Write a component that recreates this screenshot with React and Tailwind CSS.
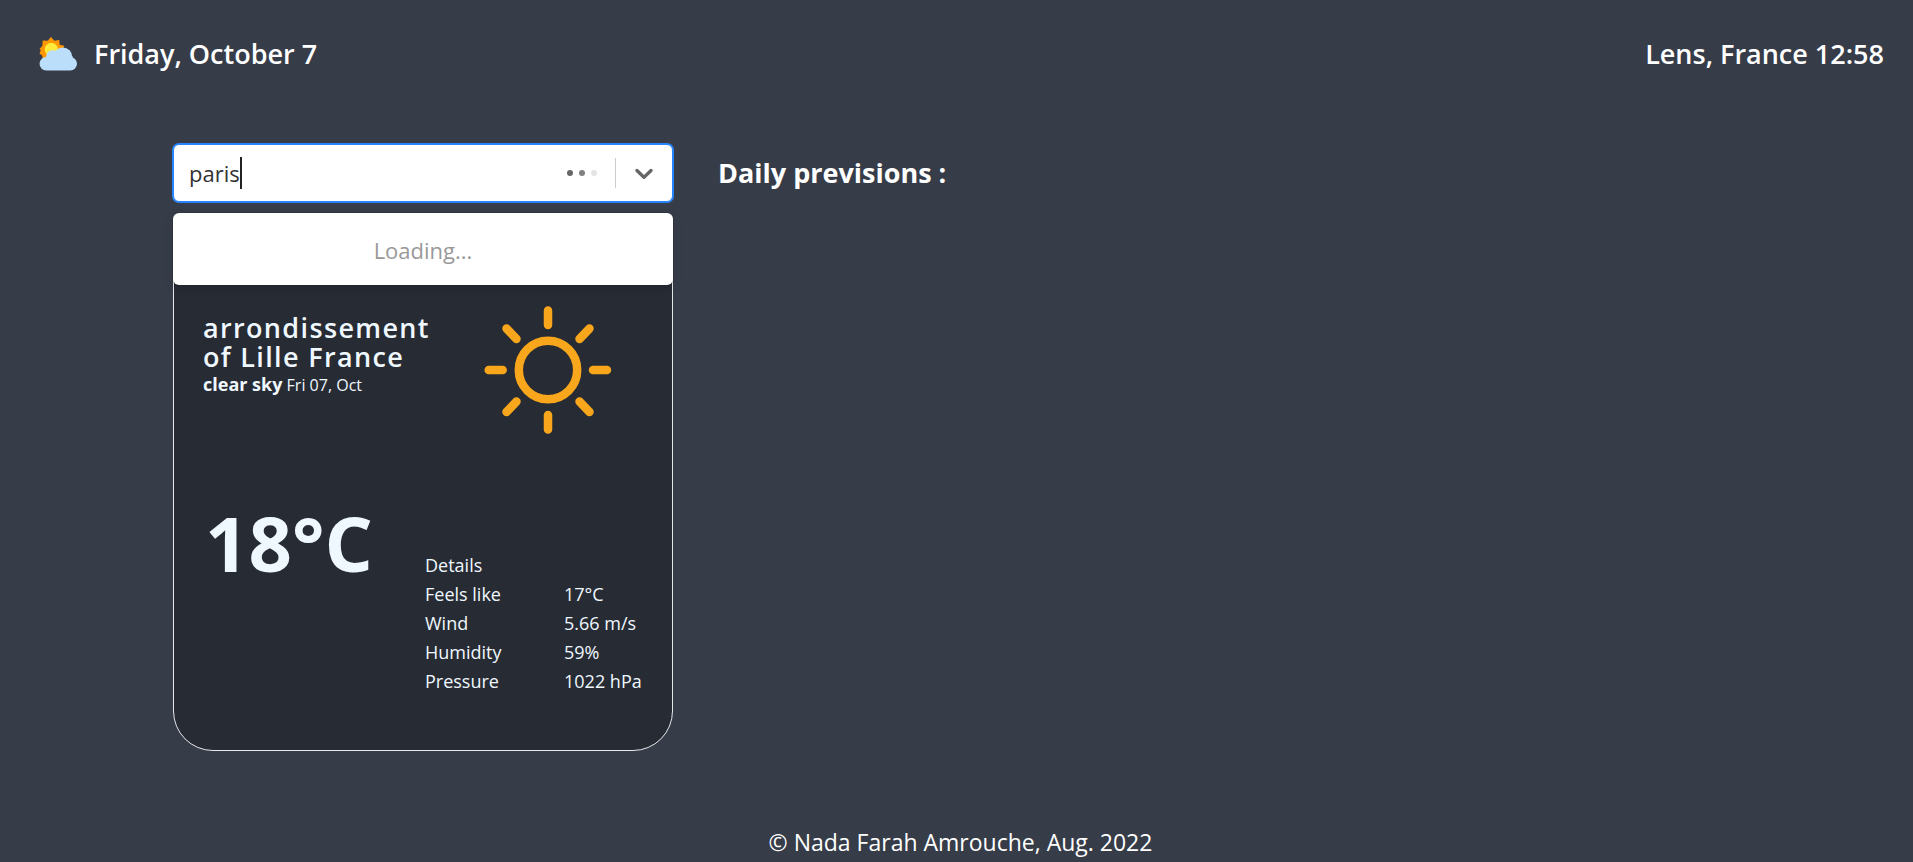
const details = [
  ["Feels like", "17°C"],
  ["Wind", "5.66 m/s"],
  ["Humidity", "59%"],
  ["Pressure", "1022 hPa"],
];

function PartlySunnyIcon() {
  return (
    <svg viewBox="0 0 40 40" className="size-10" aria-hidden="true">
      <path
        fill="#ff9800"
        d="M13 3l3.300 3.800 5-.900.300 4.800 4.600 1-1.700 4.300 2 3.800-4.400 2-.800 4.800-5-.500-3.300 3-3.300-3-5 .500-.300-4.800-2.900-2.300 1.300-3.500L1.500 15l2.900-3.200.300-5.400 5 .400z"
      />
      <circle cx="13.300" cy="15.300" r="6.600" fill="#ffeb3b" />
      <g fill="#bbdefb">
        <rect x="1.500" y="23" width="37.500" height="13.500" rx="6.750" />
        <circle cx="14.500" cy="22.500" r="6.300" />
        <circle cx="24.800" cy="23" r="9.500" />
        <path d="M8.500 22h26v8h-26z" />
      </g>
    </svg>
  );
}

function SunIcon() {
  return (
    <svg
      viewBox="0 0 128 128"
      className="size-32"
      fill="none"
      stroke="#f8a61b"
      strokeWidth="8.500"
      strokeLinecap="round"
      aria-hidden="true"
    >
      <circle cx="64" cy="64" r="29.200" />
      <path d="M64 4.500v14.500M64 109v14.500M4.700 64h14M109 64h14M22.500 22.500l10 10.500M105.500 22.500l-10 10.500M22.500 106l10-10.500M105.500 106l-10-10.500" />
    </svg>
  );
}

function CitySearch() {
  return (
    <div className="relative">
      <div className="flex h-[58px] items-center rounded-[6px] border border-[#2684ff] bg-white shadow-[0_0_0_1px_#2684ff]">
        <label htmlFor="city" className="flex flex-1 items-center pl-[15px]">
          <input
            id="city"
            type="text"
            aria-label="Search for a city"
            defaultValue="paris"
            autoComplete="off"
            className="min-w-0 bg-transparent text-[22px] leading-8 text-[#333333] outline-none [field-sizing:content]"
          />
          <span className="h-8 w-[2px] bg-[#222222]" />
        </label>
        <div className="flex gap-[6px] pr-[18px]">
          <span className="size-[6px] rounded-full bg-[#666666]" />
          <span className="size-[6px] rounded-full bg-[#808080]" />
          <span className="size-[6px] rounded-full bg-[#e4e4e4]" />
        </div>
        <span className="h-[30px] w-px bg-[#cccccc]" />
        <button type="button" aria-label="Show cities" className="px-[13px] text-[#666666]">
          <svg viewBox="0 0 20 20" className="size-[30px]" fill="currentColor">
            <path d="M4.516 7.548c0.436-0.446 1.043-0.481 1.576 0l3.908 3.747 3.908-3.747c0.533-0.481 1.141-0.446 1.574 0 0.436 0.445 0.408 1.197 0 1.615-0.406 0.418-4.695 4.502-4.695 4.502-0.217 0.223-0.502 0.335-0.787 0.335s-0.570-0.112-0.789-0.335c0 0-4.287-4.084-4.695-4.502s-0.436-1.170 0-1.615z" />
          </svg>
        </button>
      </div>
      <div className="absolute inset-x-0 top-full z-10 mt-[11px] flex h-[72px] items-center justify-center rounded-[6px] bg-white pt-[2px] text-[22px] text-[#999999] shadow-[0_0_0_1px_rgba(0,0,0,0.1),0_4px_11px_rgba(0,0,0,0.1)]">
        Loading...
      </div>
    </div>
  );
}

function CurrentWeather() {
  return (
    <section className="mt-5 flex flex-1 flex-col rounded-[40px] border border-[#e5e7eb] bg-[#272b33] px-[29px] pt-[83px] pb-[54px] text-[#f0f8ff]">
      <div className="flex items-start">
        <div className="w-[240px] pt-[7px]">
          <h2 className="text-[27px] leading-[29px] font-semibold tracking-wider">
            arrondissement of Lille France
          </h2>
          <p className="text-base leading-[26px]">
            <strong className="text-lg leading-[26px] font-bold">clear sky</strong> Fri 07, Oct
          </p>
        </div>
        <div className="pl-[41px]">
          <SunIcon />
        </div>
      </div>
      <div className="mt-auto flex">
        <p className="w-[222px] pl-[2px] text-[76px] leading-[84px] font-bold">18°C</p>
        <table className="mt-[50px] border-collapse text-left text-lg leading-[29px]">
          <caption className="text-left">Details</caption>
          <tbody>
            {details.map(([label, value]) => (
              <tr key={label}>
                <th scope="row" className="w-[139px] p-0 font-normal">
                  {label}
                </th>
                <td className="p-0 whitespace-nowrap">{value}</td>
              </tr>
            ))}
          </tbody>
        </table>
      </div>
    </section>
  );
}

export default function App() {
  return (
    <div className="flex min-h-screen flex-col bg-[#363c48] font-['Open_Sans','Noto_Sans',sans-serif] text-white">
      <header className="flex items-center justify-between px-[29px] pt-8 text-[27px] leading-[44px] font-semibold">
        <div className="flex items-center gap-4 pl-[9px]">
          <PartlySunnyIcon />
          <span>Friday, October 7</span>
        </div>
        <span>Lens, France 12:58</span>
      </header>
      <main className="mt-[68px] flex h-[607px] gap-[45px] px-[173px]">
        <div className="flex w-[500px] shrink-0 flex-col">
          <CitySearch />
          <CurrentWeather />
        </div>
        <h1 className="pt-[9px] text-[27px] leading-10 font-bold">Daily previsions :</h1>
      </main>
      <footer className="mt-auto pl-2 text-center text-[23px] leading-10">
        © Nada Farah Amrouche, Aug. 2022
      </footer>
    </div>
  );
}
